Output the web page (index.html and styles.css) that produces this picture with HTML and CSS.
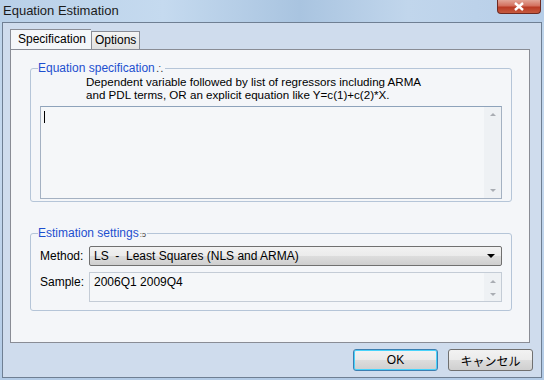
FILE: index.html
```html
<!DOCTYPE html>
<html lang="en">
<head>
  <meta charset="UTF-8">
  <title>Equation Estimation</title>
  <link rel="stylesheet" href="styles.css">
</head>
<body>
  <div class="window">
    <div class="titlebar">
      <span class="title">Equation Estimation</span>
      <div class="close">
        <svg width="14" height="9" viewBox="0 0 14 9"><path d="M3 1 L11 8 M11 1 L3 8" stroke="#fff" stroke-width="2.4"/></svg>
      </div>
    </div>
    <div class="frame">
      <div class="tabs">
        <div class="tab active">Specification</div>
        <div class="tab">Options</div>
      </div>
      <div class="panel">
        <fieldset class="group spec">
          <legend>Equation specification<span class="grip">∴</span></legend>
          <p class="hint">Dependent variable followed by list of regressors including ARMA<br>and PDL terms, OR an explicit equation like Y=c(1)+c(2)*X.</p>
          <div class="editbox big">
            <span class="caret"></span>
            <div class="vscroll">
              <span class="arrow up"></span>
              <span class="arrow down"></span>
            </div>
          </div>
        </fieldset>
        <fieldset class="group est">
          <legend>Estimation settings<span class="grip">:ᴐ</span></legend>
          <div class="row">
            <label>Method:</label>
            <div class="select">
              <span>LS&nbsp; -&nbsp; Least Squares (NLS and ARMA)</span>
              <span class="drop"></span>
            </div>
          </div>
          <div class="row">
            <label>Sample:</label>
            <div class="editbox small">
              <span class="value">2006Q1 2009Q4</span>
              <div class="vscroll spin">
                <span class="arrow up"></span>
                <span class="arrow down"></span>
              </div>
            </div>
          </div>
        </fieldset>
      </div>
      <div class="buttons">
        <button class="btn default">OK</button>
        <button class="btn">キャンセル</button>
      </div>
    </div>
  </div>
</body>
</html>
```
FILE: styles.css
```css
body { margin: 0; font-family: "Liberation Sans", "Noto Sans CJK JP", sans-serif; font-size: 12px; color: #000; }
.window { width: 544px; height: 380px; background: linear-gradient(180deg, #bcd3ea 0%, #c6d9ee 40%, #b3cbe6 100%); display: flex; flex-direction: column; overflow: hidden; }
.titlebar { height: 22px; display: flex; justify-content: space-between; align-items: flex-start;
  background: linear-gradient(90deg, #b9d0e8 0%, #c5daef 30%, #a9c4e0 55%, #c1d6ec 75%, #b7cee8 100%); }
.title { font-size: 13px; color: #1b1b1b; padding: 3px 0 0 3px; }
.close { width: 42px; height: 13px; margin-right: 3px; border: 1px solid #6e2a22; border-top: none; border-radius: 0 0 4px 4px;
  background: linear-gradient(180deg, #e2a597 0%, #d3705e 45%, #b93a24 55%, #c65a3f 100%); display: flex; align-items: center; justify-content: center; }
.frame { flex: 1; margin: 0 2px 2px 2px; border: 1px solid #6f7f93; background: #cfdced; padding: 8px 11px 0 7px; display: flex; flex-direction: column; }
.tabs { display: flex; align-items: flex-end; height: 18px; position: relative; z-index: 1; }
.tab { border: 1px solid #8a8d96; border-bottom: none; padding: 0 3px; height: 17px; line-height: 17px; background: linear-gradient(#f4f4f4, #e0e0e0); }
.tab.active { height: 19px; line-height: 19px; width: 73px; background: #f5f7fa; border-right: none; padding: 0 0 0 7px; }
.panel { height: 294px; border: 1px solid #898c95; background: #f4f6f9; padding: 11px 17px 0 19px; box-sizing: border-box; }
.group { margin: 0; border: 1px solid #b5c5d8; border-radius: 3px; padding: 0 9px; }
.group legend { color: #1d4fcf; padding: 0 1px 0 0; margin-left: -2px; font-size: 12px; }
.grip { font-size: 8px; color: #333; margin-left: 1px; }
.spec { height: 141px; box-sizing: border-box; }
.hint { margin: 1px 0 0 46px; line-height: 12.5px; font-size: 11.6px; }
.editbox { border: 1px solid #a4b1c2; border-top-color: #8ea3bb; background: #f5f7f9; position: relative; display: flex; justify-content: space-between; }
.big { margin-top: 5px; height: 93px; box-sizing: border-box; }
.caret { width: 1px; height: 12px; background: #000; margin: 4px 0 0 3px; }
.vscroll { width: 17px; background: #eef1f4; display: flex; flex-direction: column; justify-content: space-between; align-items: center; padding: 6px 0 6px; }
.arrow { width: 0; height: 0; border-left: 3px solid transparent; border-right: 3px solid transparent; }
.arrow.up { border-bottom: 3px solid #a9adb3; }
.arrow.down { border-top: 3px solid #a9adb3; }
.est { margin-top: 24px; height: 85px; box-sizing: border-box; padding-top: 6px; }
.row { display: flex; align-items: flex-start; margin-bottom: 6px; }
.row label { width: 49px; padding-top: 3px; }
.select { flex: 1; height: 20px; box-sizing: border-box; border: 1px solid #707070; border-radius: 2px; background: linear-gradient(#f2f2f2 0%, #ebebeb 50%, #dddddd 51%, #cfcfcf 100%);
  display: flex; justify-content: space-between; align-items: center; padding: 0 6px 0 4px; font-size: 12px; }
.drop { border-left: 4px solid transparent; border-right: 4px solid transparent; border-top: 4px solid #000; }
.small { flex: 1; height: 30px; box-sizing: border-box; border-color: #c4ccd6; }
.value { padding: 2px 0 0 4px; }
.spin { padding: 7px 0 5px; }
.buttons { display: flex; justify-content: flex-end; gap: 10px; margin-top: 6px; margin-right: -3px; }
.btn { width: 85px; height: 22px; border: 1px solid #707070; border-radius: 3px; font-family: "Liberation Sans", "Noto Sans CJK JP", sans-serif; font-size: 12px;
  background: linear-gradient(#f2f2f2 0%, #ebebeb 50%, #dddddd 51%, #cfcfcf 100%); padding: 0; }
.btn.default { border-color: #3c7fb1; box-shadow: inset 0 0 0 1px #48d3fb; }
```
